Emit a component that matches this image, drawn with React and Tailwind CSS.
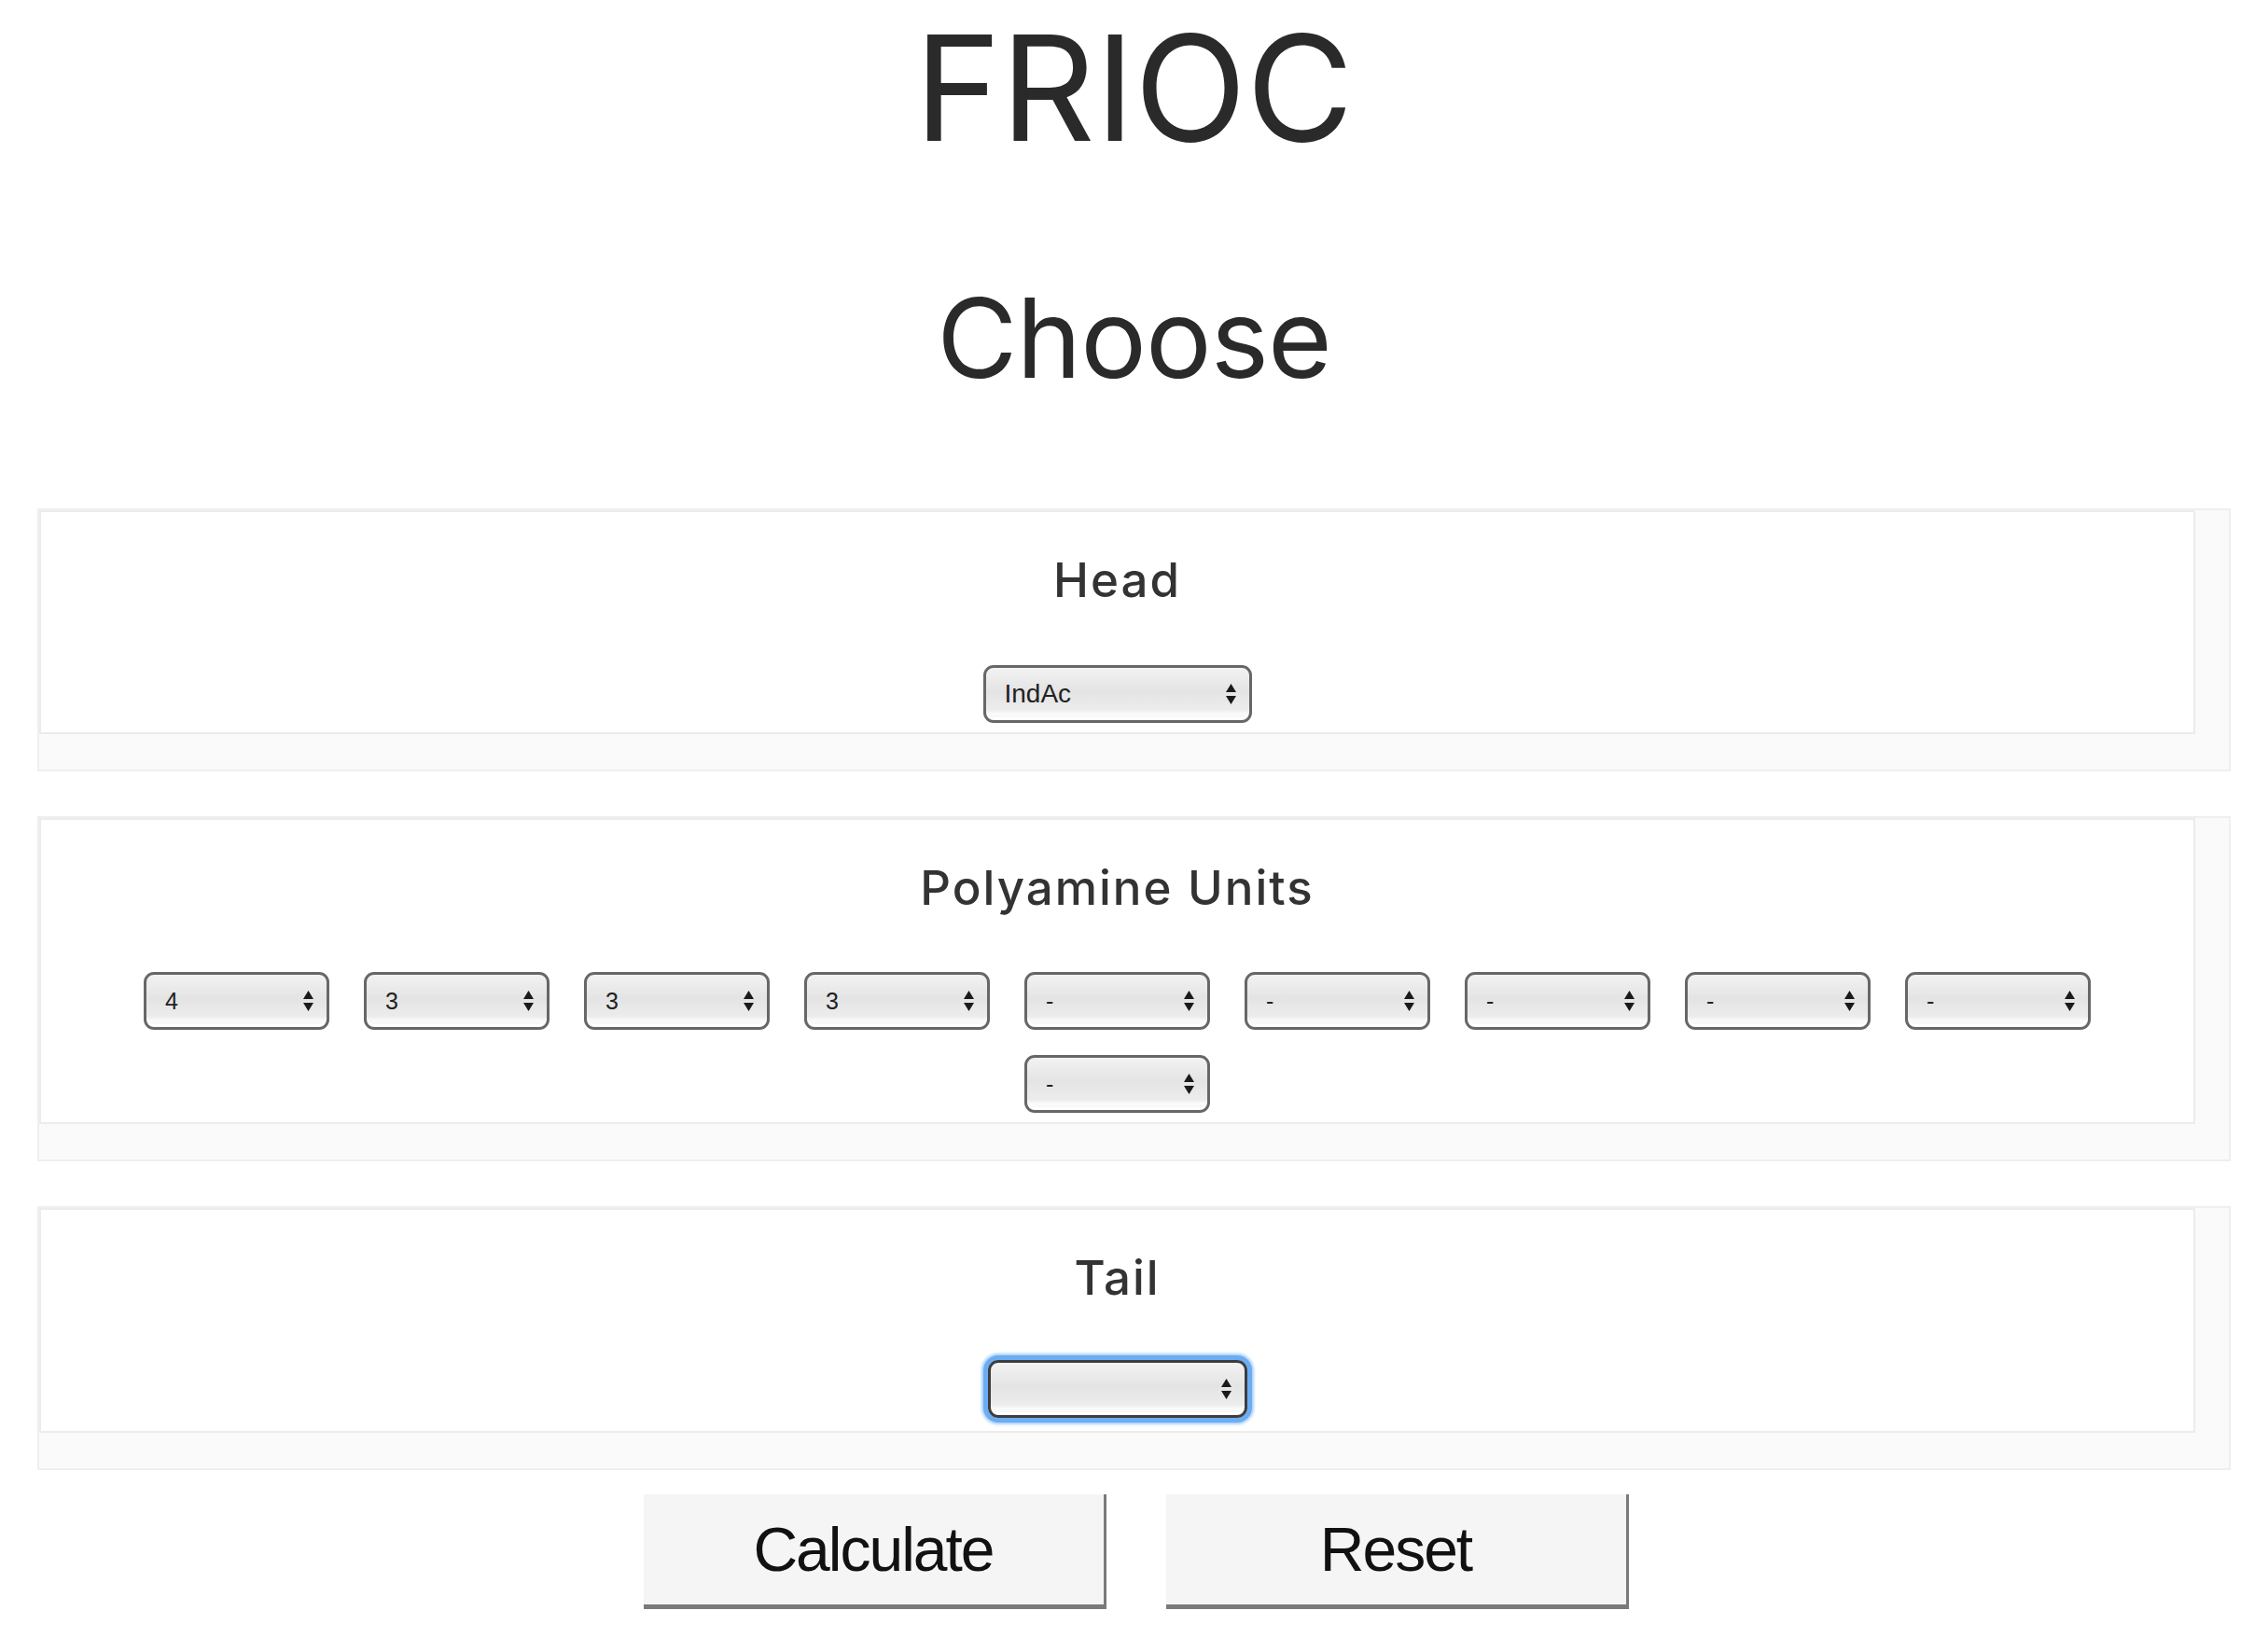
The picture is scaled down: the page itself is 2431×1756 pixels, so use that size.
import React from "react";

const heading = { fontFamily: "Inter, 'Noto Sans', sans-serif" };
const sysFont = { fontFamily: "'Liberation Sans', Arial, sans-serif" };

function Arrows() {
  return (
    <svg width="11" height="22" viewBox="0 0 11 22" className="shrink-0">
      <polygon points="5.5,0 11,9 0,9" fill="#1a1a1a" />
      <polygon points="0,13 11,13 5.5,22" fill="#1a1a1a" />
    </svg>
  );
}

function Select({ value, width, focus, textSize = "text-[25px]" }) {
  return (
    <div
      className={
        "flex h-[62px] items-center justify-between rounded-[11px] border-[3px] pl-[20px] pr-[14px] bg-[linear-gradient(to_bottom,#f2f2f2_0%,#e4e4e4_45%,#ececec_80%,#fbfbfb_88%,#f3f3f3_100%)] " +
        width +
        (focus
          ? " border-[#3d3d3d] shadow-[inset_0_-3px_0_#ffffff,0_0_0_5px_#6badf5,0_0_3px_7px_#a9cff8]"
          : " border-[#676767] shadow-[inset_0_-3px_0_#ffffff]")
      }
      style={sysFont}
    >
      <span className={textSize + " leading-none text-[#222]"}>{value}</span>
      <Arrows />
    </div>
  );
}

function Panel({ children }) {
  return (
    <div className="mx-[40px] border-2 border-[#efefef] bg-[#fafafa] pr-[36px] pb-[38px]">
      <div className="flex flex-col items-center border-2 border-[#ececec] bg-white pt-[43px] pb-[10px]">
        {children}
      </div>
    </div>
  );
}

function PanelTitle({ children }) {
  return (
    <div
      className="h-[60px] text-[51px] leading-[60px] font-medium tracking-[2px] text-[#333]"
      style={heading}
    >
      {children}
    </div>
  );
}

function Button({ children }) {
  return (
    <button
      className="flex h-[123px] w-[496px] items-center justify-center border-r-[3px] border-b-[5px] border-r-[#7a7a7a] border-b-[#7a7a7a] bg-[#f5f5f5] text-[66px] tracking-[-2px] text-[#111]"
      style={sysFont}
    >
      {children}
    </button>
  );
}

export default function App() {
  const units = ["4", "3", "3", "3", "-", "-", "-", "-", "-", "-"];
  return (
    <div className="min-h-[1756px] w-full bg-white">
      <h1
        className="text-center text-[157px] leading-[1.2] font-normal text-[#2a2a2a]"
        style={heading}
      >
        FRIOC
      </h1>
      <h2
        className="mt-[110px] text-center text-[118px] leading-[1.1] font-normal tracking-[-1px] text-[#2a2a2a]"
        style={heading}
      >
        Choose
      </h2>

      <div className="mt-[117px] flex flex-col gap-[48px]">
        <Panel>
          <PanelTitle>Head</PanelTitle>
          <div className="mt-[61px]">
            <Select value="IndAc" width="w-[288px]" textSize="text-[28px]" />
          </div>
        </Panel>

        <Panel>
          <PanelTitle>Polyamine Units</PanelTitle>
          <div className="mt-[60px] flex w-[2200px] flex-wrap justify-center gap-x-[37px] gap-y-[27px]">
            {units.map((u, i) => (
              <Select key={i} value={u} width="w-[199px]" />
            ))}
          </div>
        </Panel>

        <Panel>
          <PanelTitle>Tail</PanelTitle>
          <div className="mt-[58px] mb-[4px]">
            <Select value="" width="w-[278px]" focus />
          </div>
        </Panel>
      </div>

      <div className="mt-[26px] flex justify-center gap-[64px] pl-[4px]">
        <Button>Calculate</Button>
        <Button>Reset</Button>
      </div>
    </div>
  );
}
